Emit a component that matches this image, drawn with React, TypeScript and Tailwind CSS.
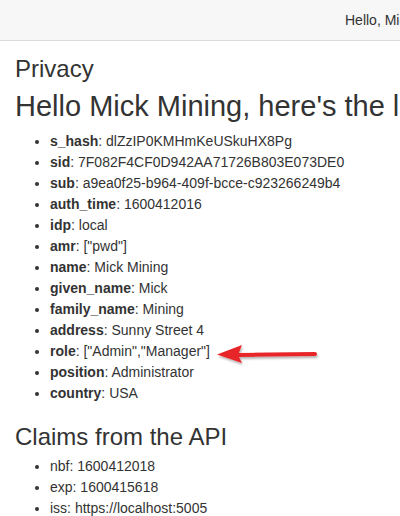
const claims: [string, string][] = [
  ["s_hash", "dlZzIP0KMHmKeUSkuHX8Pg"],
  ["sid", "7F082F4CF0D942AA71726B803E073DE0"],
  ["sub", "a9ea0f25-b964-409f-bcce-c923266249b4"],
  ["auth_time", "1600412016"],
  ["idp", "local"],
  ["amr", '["pwd"]'],
  ["name", "Mick Mining"],
  ["given_name", "Mick"],
  ["family_name", "Mining"],
  ["address", "Sunny Street 4"],
  ["role", '["Admin","Manager"]'],
  ["position", "Administrator"],
  ["country", "USA"],
];

const apiClaims = ["nbf: 1600412018", "exp: 1600415618", "iss: https://localhost:5005"];

export default function App() {
  return (
    <div
      className="relative w-[400px] h-[516px] overflow-hidden bg-white text-[#333] whitespace-nowrap"
      style={{ fontFamily: '"Liberation Sans", Arial, sans-serif' }}
    >
      {/* Navbar */}
      <div className="h-[41px] bg-[#f7f7f7] border-b border-[#dcdcdc] flex items-center pl-[345px] text-[14px]">
        Hello, Mick Mining
      </div>

      <div className="px-[15px]">
        <h3 className="text-[24px] leading-[30px] mt-[13px]">Privacy</h3>
        <h1 className="text-[29px] leading-[38px] mt-[3px]">Hello Mick Mining, here's the list of your claims</h1>

        <ul className="list-disc pl-[35px] mt-[6px] text-[14px] leading-[21px]">
          {claims.map(([k, v]) => (
            <li key={k}>
              <strong className="font-bold">{k}</strong>: {v}
            </li>
          ))}
        </ul>

        <h3 className="text-[24px] leading-[30px] mt-[18px]">Claims from the API</h3>
        <ul className="list-disc pl-[35px] mt-[4px] text-[14px] leading-[21px]">
          {apiClaims.map((c) => (
            <li key={c}>{c}</li>
          ))}
        </ul>
      </div>

      {/* annotation arrow */}
      <svg className="absolute left-[210px] top-[340px]" width="112" height="30" viewBox="0 0 112 30">
        <defs>
          <filter id="sh" x="-10%" y="-50%" width="120%" height="200%">
            <feDropShadow dx="1" dy="2" stdDeviation="1.2" floodColor="#000" floodOpacity="0.3" />
          </filter>
        </defs>
        <g filter="url(#sh)">
          <line x1="28" y1="15" x2="105" y2="14" stroke="#e8262a" strokeWidth="4" strokeLinecap="round" />
          <polygon points="7,14.5 32,5 28,15 32,23" fill="#e8262a" />
        </g>
      </svg>
    </div>
  );
}
